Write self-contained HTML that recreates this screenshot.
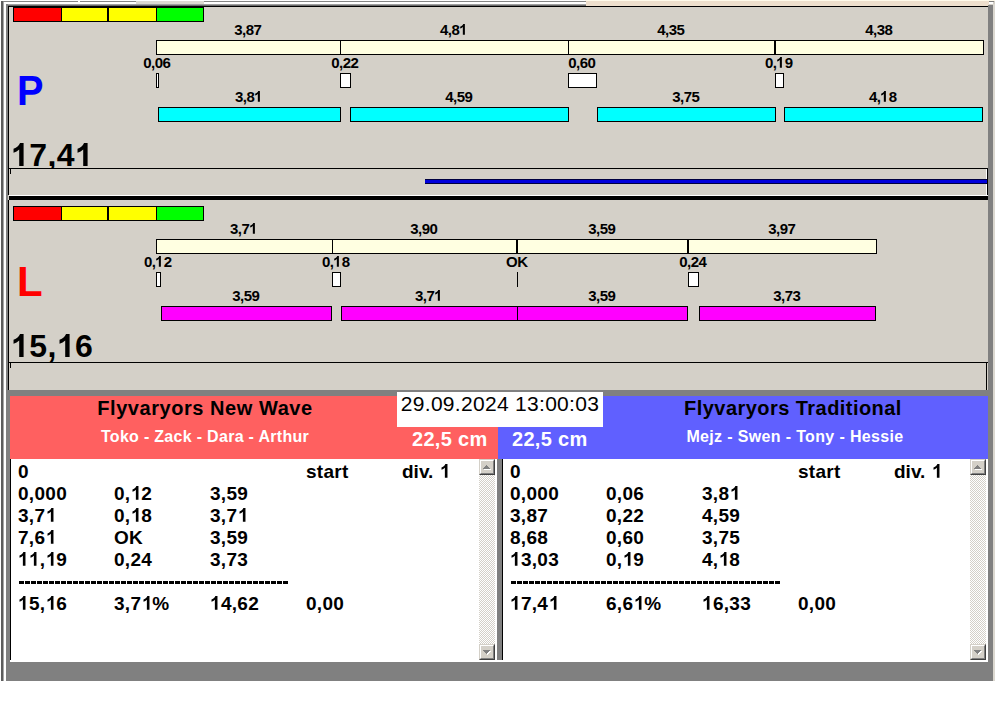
<!DOCTYPE html>
<html>
<head>
<meta charset="utf-8">
<title>Scoreboard</title>
<style>
html,body{margin:0;padding:0;}
body{width:995px;height:716px;background:#ffffff;overflow:hidden;position:relative;
 font-family:"Liberation Sans",sans-serif;font-weight:bold;color:#000;}
.a{position:absolute;box-sizing:border-box;}
.bar{position:absolute;box-sizing:border-box;border:1px solid #000;height:15px;}
.cream{background:#ffffe1;}
.cy{background:#00ffff;}
.mg{background:#ff00ff;}
.wh{background:#ffffff;}
.lbl{position:absolute;width:60px;margin-left:-30px;text-align:center;font-size:15px;line-height:14px;height:14px;white-space:nowrap;letter-spacing:-0.5px;text-indent:-0.5px;}
.big{position:absolute;font-size:32px;line-height:32px;white-space:nowrap;letter-spacing:0.4px;}
.let{position:absolute;font-size:42px;line-height:42px;white-space:nowrap;}
.row{position:absolute;font-size:19px;line-height:22px;height:22px;white-space:nowrap;letter-spacing:0.3px;}
.dash{width:269px;height:3px;background:repeating-linear-gradient(90deg,#000 0,#000 5px,#fff 5px,#fff 6px);}

.sb{position:absolute;width:16px;top:459px;height:201px;
 background-color:#fff;
 background-image:linear-gradient(45deg,#d4d0c8 25%,transparent 25%,transparent 75%,#d4d0c8 75%),linear-gradient(45deg,#d4d0c8 25%,transparent 25%,transparent 75%,#d4d0c8 75%);
 background-size:2px 2px;background-position:0 0,1px 1px;}
.btn{position:absolute;left:0;width:16px;height:16px;box-sizing:border-box;background:#d4d0c8;
 border-top:1px solid #d4d0c8;border-left:1px solid #d4d0c8;border-right:1px solid #404040;border-bottom:1px solid #404040;}
.btn:before{content:"";position:absolute;left:0;top:0;right:0;bottom:0;
 border-top:1px solid #fff;border-left:1px solid #fff;border-right:1px solid #808080;border-bottom:1px solid #808080;}
.btn svg{position:absolute;left:-1px;top:-1px;}
.z{font-size:0;color:transparent;}
.g1{display:inline-block;width:0.5562em;height:0.7188em;vertical-align:baseline;fill:#000;overflow:visible;}
</style>
</head>
<body>
<!-- window background -->
<div class="a" style="left:0;top:0;width:995px;height:681px;background:#d4d0c8;"></div>

<!-- top frame -->
<div class="a" style="left:0;top:0;width:586px;height:1px;background:#ffffff;"></div>
<div class="a" style="left:1px;top:1px;width:585px;height:1px;background:#858585;"></div>
<div class="a" style="left:3px;top:2px;width:583px;height:2px;background:#ffffff;"></div>
<div class="a" style="left:6px;top:4px;width:580px;height:1px;background:#a0a0a0;"></div>
<div class="a" style="left:6px;top:5px;width:580px;height:1px;background:#6a6a6a;"></div>
<div class="a" style="left:136px;top:1px;width:68px;height:3px;background:#dcd9d2;"></div>
<div class="a" style="left:78px;top:1px;width:2px;height:1px;background:#fff;"></div>
<div class="a" style="left:585px;top:0;width:410px;height:1px;background:#fffaea;"></div>
<div class="a" style="left:586px;top:1px;width:403px;height:5px;background:#eedfcd;"></div>
<div class="a" style="left:989px;top:1px;width:5px;height:1px;background:#808080;"></div>
<div class="a" style="left:989px;top:2px;width:4px;height:2px;background:#ffffff;"></div>

<!-- left frame -->
<div class="a" style="left:0;top:0;width:1px;height:681px;background:#ffffff;"></div>
<div class="a" style="left:1px;top:1px;width:2px;height:680px;background:#5c5c5c;"></div>
<div class="a" style="left:3px;top:2px;width:3px;height:679px;background:#ffffff;"></div>
<div class="a" style="left:3px;top:2px;width:1px;height:679px;background:#a8a8a8;"></div>
<div class="a" style="left:6px;top:4px;width:2px;height:677px;background:#808080;"></div>
<!-- right frame -->
<div class="a" style="left:988px;top:5px;width:5px;height:676px;background:#808080;"></div>
<div class="a" style="left:993px;top:4px;width:2px;height:677px;background:#dbd8d0;"></div>

<!-- panel borders -->
<div class="a" style="left:8px;top:6px;width:980px;height:1px;background:#000;"></div>
<div class="a" style="left:8px;top:6px;width:1px;height:189px;background:#000;"></div>
<div class="a" style="left:8px;top:200px;width:1px;height:190px;background:#000;"></div>
<!-- separator between panels -->
<div class="a" style="left:9px;top:195px;width:979px;height:1px;background:#ffffff;"></div>
<div class="a" style="left:9px;top:196px;width:979px;height:4px;background:#000;"></div>

<!-- PANEL 1 -->
<div id="p1">
<div class="a" style="left:13px;top:7px;width:191px;height:15px;background:#000;"></div>
<div class="a" style="left:14px;top:8px;width:47px;height:13px;background:#ff0000;"></div>
<div class="a" style="left:62px;top:8px;width:45px;height:13px;background:#ffff00;"></div>
<div class="a" style="left:109px;top:8px;width:47px;height:13px;background:#ffff00;"></div>
<div class="a" style="left:157px;top:8px;width:46px;height:13px;background:#00ff00;"></div>

<div class="bar cream" style="left:156px;top:40px;width:828px;"></div>
<div class="a" style="left:340px;top:40px;width:1px;height:15px;background:#000;"></div>
<div class="a" style="left:568px;top:40px;width:1px;height:15px;background:#000;"></div>
<div class="a" style="left:774px;top:40px;width:2px;height:15px;background:#000;"></div>

<div class="lbl" style="left:248px;top:23px;">3,87</div>
<div class="lbl" style="left:454px;top:23px;">4,8<span class="z">1</span><svg class="g1" viewBox="0 0 1139 1472"><path d="M806 1472H525V413Q371 557 162 626V371Q272 335 401 234.500T578 0H806Z"/></svg></div>
<div class="lbl" style="left:671px;top:23px;">4,35</div>
<div class="lbl" style="left:879px;top:23px;">4,38</div>

<div class="lbl" style="left:157px;top:56px;">0,06</div>
<div class="lbl" style="left:345px;top:56px;">0,22</div>
<div class="lbl" style="left:582px;top:56px;">0,60</div>
<div class="lbl" style="left:779px;top:56px;">0,<span class="z">1</span><svg class="g1" viewBox="0 0 1139 1472"><path d="M806 1472H525V413Q371 557 162 626V371Q272 335 401 234.500T578 0H806Z"/></svg>9</div>

<div class="bar wh" style="left:156px;top:73px;width:3px;"></div>
<div class="bar wh" style="left:340px;top:73px;width:11px;"></div>
<div class="bar wh" style="left:568px;top:73px;width:29px;"></div>
<div class="bar wh" style="left:775px;top:73px;width:9px;"></div>

<div class="lbl" style="left:249px;top:90px;">3,8<span class="z">1</span><svg class="g1" viewBox="0 0 1139 1472"><path d="M806 1472H525V413Q371 557 162 626V371Q272 335 401 234.500T578 0H806Z"/></svg></div>
<div class="lbl" style="left:459px;top:90px;">4,59</div>
<div class="lbl" style="left:686px;top:90px;">3,75</div>
<div class="lbl" style="left:883px;top:90px;">4,<span class="z">1</span><svg class="g1" viewBox="0 0 1139 1472"><path d="M806 1472H525V413Q371 557 162 626V371Q272 335 401 234.500T578 0H806Z"/></svg>8</div>

<div class="bar cy" style="left:158px;top:107px;width:183px;"></div>
<div class="bar cy" style="left:350px;top:107px;width:219px;"></div>
<div class="bar cy" style="left:597px;top:107px;width:179px;"></div>
<div class="bar cy" style="left:784px;top:107px;width:199px;"></div>

<div class="let" style="left:17px;top:70px;color:#0000ff;transform:scale(0.945,1.015);transform-origin:2px 6px;">P</div>
<div class="a" style="left:9px;top:130px;width:200px;height:38px;overflow:hidden;"><div class="big" style="left:2px;top:9px;"><span class="z">1</span><svg class="g1" viewBox="0 0 1139 1472"><path d="M806 1472H525V413Q371 557 162 626V371Q272 335 401 234.500T578 0H806Z"/></svg>7,4<span class="z">1</span><svg class="g1" viewBox="0 0 1139 1472"><path d="M806 1472H525V413Q371 557 162 626V371Q272 335 401 234.500T578 0H806Z"/></svg></div></div>

<!-- score box -->
<div class="a" style="left:9px;top:168px;width:979px;height:1px;background:#000;"></div>
<div class="a" style="left:10px;top:169px;width:1px;height:5px;background:#000;"></div>
<div class="a" style="left:986px;top:169px;width:1px;height:26px;background:#ffffff;"></div>
<div class="a" style="left:987px;top:168px;width:1px;height:27px;background:#000;"></div>
<div class="a" style="left:425px;top:179px;width:562px;height:5px;background:#0000dc;border-top:1px solid #000040;border-bottom:1px solid #000040;"></div>
</div>

<!-- PANEL 2 -->
<div id="p2">
<div class="a" style="left:13px;top:206px;width:191px;height:15px;background:#000;"></div>
<div class="a" style="left:14px;top:207px;width:47px;height:13px;background:#ff0000;"></div>
<div class="a" style="left:62px;top:207px;width:45px;height:13px;background:#ffff00;"></div>
<div class="a" style="left:109px;top:207px;width:47px;height:13px;background:#ffff00;"></div>
<div class="a" style="left:157px;top:207px;width:46px;height:13px;background:#00ff00;"></div>

<div class="bar cream" style="left:156px;top:239px;width:721px;"></div>
<div class="a" style="left:332px;top:239px;width:1px;height:15px;background:#000;"></div>
<div class="a" style="left:516px;top:239px;width:2px;height:15px;background:#000;"></div>
<div class="a" style="left:687px;top:239px;width:2px;height:15px;background:#000;"></div>

<div class="lbl" style="left:244px;top:222px;">3,7<span class="z">1</span><svg class="g1" viewBox="0 0 1139 1472"><path d="M806 1472H525V413Q371 557 162 626V371Q272 335 401 234.500T578 0H806Z"/></svg></div>
<div class="lbl" style="left:424px;top:222px;">3,90</div>
<div class="lbl" style="left:602px;top:222px;">3,59</div>
<div class="lbl" style="left:782px;top:222px;">3,97</div>

<div class="lbl" style="left:158px;top:255px;">0,<span class="z">1</span><svg class="g1" viewBox="0 0 1139 1472"><path d="M806 1472H525V413Q371 557 162 626V371Q272 335 401 234.500T578 0H806Z"/></svg>2</div>
<div class="lbl" style="left:336px;top:255px;">0,<span class="z">1</span><svg class="g1" viewBox="0 0 1139 1472"><path d="M806 1472H525V413Q371 557 162 626V371Q272 335 401 234.500T578 0H806Z"/></svg>8</div>
<div class="lbl" style="left:517px;top:255px;">OK</div>
<div class="lbl" style="left:693px;top:255px;">0,24</div>

<div class="bar wh" style="left:156px;top:272px;width:5px;"></div>
<div class="bar wh" style="left:332px;top:272px;width:9px;"></div>
<div class="a" style="left:517px;top:272px;width:1px;height:15px;background:#000;"></div>
<div class="bar wh" style="left:688px;top:272px;width:11px;"></div>

<div class="lbl" style="left:246px;top:289px;">3,59</div>
<div class="lbl" style="left:429px;top:289px;">3,7<span class="z">1</span><svg class="g1" viewBox="0 0 1139 1472"><path d="M806 1472H525V413Q371 557 162 626V371Q272 335 401 234.500T578 0H806Z"/></svg></div>
<div class="lbl" style="left:602px;top:289px;">3,59</div>
<div class="lbl" style="left:787px;top:289px;">3,73</div>

<div class="bar mg" style="left:161px;top:306px;width:171px;"></div>
<div class="bar mg" style="left:341px;top:306px;width:177px;"></div>
<div class="bar mg" style="left:517px;top:306px;width:171px;"></div>
<div class="bar mg" style="left:699px;top:306px;width:177px;"></div>

<div class="let" style="left:17px;top:261px;color:#ff0000;">L</div>
<div class="big" style="left:11px;top:330px;"><span class="z">1</span><svg class="g1" viewBox="0 0 1139 1472"><path d="M806 1472H525V413Q371 557 162 626V371Q272 335 401 234.500T578 0H806Z"/></svg>5,<span class="z">1</span><svg class="g1" viewBox="0 0 1139 1472"><path d="M806 1472H525V413Q371 557 162 626V371Q272 335 401 234.500T578 0H806Z"/></svg>6</div>

<div class="a" style="left:9px;top:362px;width:979px;height:1px;background:#000;"></div>
<div class="a" style="left:10px;top:363px;width:1px;height:5px;background:#000;"></div>
<div class="a" style="left:986px;top:363px;width:1px;height:27px;background:#000;"></div>
</div>

<!-- LOWER SECTION -->
<div class="a" style="left:6px;top:390px;width:987px;height:291px;background:#808080;"></div>
<div class="a" style="left:10px;top:396px;width:488px;height:63px;background:#ff6060;"></div>
<div class="a" style="left:498px;top:396px;width:490px;height:63px;background:#6060ff;"></div>

<div class="a" style="left:10px;top:396px;width:390px;text-align:center;font-size:20px;line-height:24px;letter-spacing:0.55px;white-space:nowrap;">Flyvaryors New Wave</div>
<div class="a" style="left:10px;top:427px;width:390px;text-align:center;font-size:16px;line-height:20px;letter-spacing:0.3px;color:#fff;white-space:nowrap;">Toko - Zack - Dara - Arthur</div>
<div class="a" style="left:600px;top:396px;width:386px;text-align:center;font-size:20px;line-height:24px;letter-spacing:0.45px;white-space:nowrap;">Flyvaryors Traditional</div>
<div class="a" style="left:602px;top:427px;width:386px;text-align:center;font-size:16px;line-height:20px;letter-spacing:0.35px;color:#fff;white-space:nowrap;">Mejz - Swen - Tony - Hessie</div>

<div class="a" style="left:397px;top:392px;width:206px;height:35px;background:#fff;"></div>
<div class="a" style="left:397px;top:392px;width:206px;text-align:center;font-size:21px;line-height:24px;letter-spacing:0.3px;font-weight:normal;white-space:nowrap;">29.09.2024 13:00:03</div>
<div class="a" style="left:412px;top:427px;font-size:20px;line-height:24px;letter-spacing:0.3px;color:#fff;white-space:nowrap;">22,5 cm</div>
<div class="a" style="left:512px;top:427px;font-size:20px;line-height:24px;letter-spacing:0.3px;color:#fff;white-space:nowrap;">22,5 cm</div>

<!-- list boxes -->
<div class="a" style="left:10px;top:459px;width:487px;height:202px;background:#fff;"></div>
<div class="a" style="left:502px;top:459px;width:1px;height:202px;background:#000;"></div>
<div class="a" style="left:10px;top:459px;width:1px;height:201px;background:#000;"></div>
<div class="a" style="left:503px;top:459px;width:485px;height:202px;background:#fff;"></div>

<div id="listL">
<div class="row" style="left:18px;top:461px;">0</div>
<div class="row" style="left:306px;top:461px;">start</div>
<div class="row" style="left:402px;top:461px;letter-spacing:0;word-spacing:1px;">div. <span class="z">1</span><svg class="g1" viewBox="0 0 1139 1472"><path d="M806 1472H525V413Q371 557 162 626V371Q272 335 401 234.500T578 0H806Z"/></svg></div>
<div class="row" style="left:18px;top:483px;">0,000</div>
<div class="row" style="left:114px;top:483px;">0,<span class="z">1</span><svg class="g1" viewBox="0 0 1139 1472"><path d="M806 1472H525V413Q371 557 162 626V371Q272 335 401 234.500T578 0H806Z"/></svg>2</div>
<div class="row" style="left:210px;top:483px;">3,59</div>
<div class="row" style="left:18px;top:505px;">3,7<span class="z">1</span><svg class="g1" viewBox="0 0 1139 1472"><path d="M806 1472H525V413Q371 557 162 626V371Q272 335 401 234.500T578 0H806Z"/></svg></div>
<div class="row" style="left:114px;top:505px;">0,<span class="z">1</span><svg class="g1" viewBox="0 0 1139 1472"><path d="M806 1472H525V413Q371 557 162 626V371Q272 335 401 234.500T578 0H806Z"/></svg>8</div>
<div class="row" style="left:210px;top:505px;">3,7<span class="z">1</span><svg class="g1" viewBox="0 0 1139 1472"><path d="M806 1472H525V413Q371 557 162 626V371Q272 335 401 234.500T578 0H806Z"/></svg></div>
<div class="row" style="left:18px;top:527px;">7,6<span class="z">1</span><svg class="g1" viewBox="0 0 1139 1472"><path d="M806 1472H525V413Q371 557 162 626V371Q272 335 401 234.500T578 0H806Z"/></svg></div>
<div class="row" style="left:114px;top:527px;">OK</div>
<div class="row" style="left:210px;top:527px;">3,59</div>
<div class="row" style="left:18px;top:549px;"><span class="z">1</span><svg class="g1" viewBox="0 0 1139 1472"><path d="M806 1472H525V413Q371 557 162 626V371Q272 335 401 234.500T578 0H806Z"/></svg><span class="z">1</span><svg class="g1" viewBox="0 0 1139 1472"><path d="M806 1472H525V413Q371 557 162 626V371Q272 335 401 234.500T578 0H806Z"/></svg>,<span class="z">1</span><svg class="g1" viewBox="0 0 1139 1472"><path d="M806 1472H525V413Q371 557 162 626V371Q272 335 401 234.500T578 0H806Z"/></svg>9</div>
<div class="row" style="left:114px;top:549px;">0,24</div>
<div class="row" style="left:210px;top:549px;">3,73</div>
<div class="a dash" style="left:19px;top:581px;"></div>
<div class="row" style="left:18px;top:593px;"><span class="z">1</span><svg class="g1" viewBox="0 0 1139 1472"><path d="M806 1472H525V413Q371 557 162 626V371Q272 335 401 234.500T578 0H806Z"/></svg>5,<span class="z">1</span><svg class="g1" viewBox="0 0 1139 1472"><path d="M806 1472H525V413Q371 557 162 626V371Q272 335 401 234.500T578 0H806Z"/></svg>6</div>
<div class="row" style="left:114px;top:593px;">3,7<span class="z">1</span><svg class="g1" viewBox="0 0 1139 1472"><path d="M806 1472H525V413Q371 557 162 626V371Q272 335 401 234.500T578 0H806Z"/></svg>%</div>
<div class="row" style="left:210px;top:593px;"><span class="z">1</span><svg class="g1" viewBox="0 0 1139 1472"><path d="M806 1472H525V413Q371 557 162 626V371Q272 335 401 234.500T578 0H806Z"/></svg>4,62</div>
<div class="row" style="left:306px;top:593px;">0,00</div>
</div>
<div id="listR">
<div class="row" style="left:510px;top:461px;">0</div>
<div class="row" style="left:798px;top:461px;">start</div>
<div class="row" style="left:894px;top:461px;letter-spacing:0;word-spacing:1px;">div. <span class="z">1</span><svg class="g1" viewBox="0 0 1139 1472"><path d="M806 1472H525V413Q371 557 162 626V371Q272 335 401 234.500T578 0H806Z"/></svg></div>
<div class="row" style="left:510px;top:483px;">0,000</div>
<div class="row" style="left:606px;top:483px;">0,06</div>
<div class="row" style="left:702px;top:483px;">3,8<span class="z">1</span><svg class="g1" viewBox="0 0 1139 1472"><path d="M806 1472H525V413Q371 557 162 626V371Q272 335 401 234.500T578 0H806Z"/></svg></div>
<div class="row" style="left:510px;top:505px;">3,87</div>
<div class="row" style="left:606px;top:505px;">0,22</div>
<div class="row" style="left:702px;top:505px;">4,59</div>
<div class="row" style="left:510px;top:527px;">8,68</div>
<div class="row" style="left:606px;top:527px;">0,60</div>
<div class="row" style="left:702px;top:527px;">3,75</div>
<div class="row" style="left:510px;top:549px;"><span class="z">1</span><svg class="g1" viewBox="0 0 1139 1472"><path d="M806 1472H525V413Q371 557 162 626V371Q272 335 401 234.500T578 0H806Z"/></svg>3,03</div>
<div class="row" style="left:606px;top:549px;">0,<span class="z">1</span><svg class="g1" viewBox="0 0 1139 1472"><path d="M806 1472H525V413Q371 557 162 626V371Q272 335 401 234.500T578 0H806Z"/></svg>9</div>
<div class="row" style="left:702px;top:549px;">4,<span class="z">1</span><svg class="g1" viewBox="0 0 1139 1472"><path d="M806 1472H525V413Q371 557 162 626V371Q272 335 401 234.500T578 0H806Z"/></svg>8</div>
<div class="a dash" style="left:511px;top:581px;"></div>
<div class="row" style="left:510px;top:593px;"><span class="z">1</span><svg class="g1" viewBox="0 0 1139 1472"><path d="M806 1472H525V413Q371 557 162 626V371Q272 335 401 234.500T578 0H806Z"/></svg>7,4<span class="z">1</span><svg class="g1" viewBox="0 0 1139 1472"><path d="M806 1472H525V413Q371 557 162 626V371Q272 335 401 234.500T578 0H806Z"/></svg></div>
<div class="row" style="left:606px;top:593px;">6,6<span class="z">1</span><svg class="g1" viewBox="0 0 1139 1472"><path d="M806 1472H525V413Q371 557 162 626V371Q272 335 401 234.500T578 0H806Z"/></svg>%</div>
<div class="row" style="left:702px;top:593px;"><span class="z">1</span><svg class="g1" viewBox="0 0 1139 1472"><path d="M806 1472H525V413Q371 557 162 626V371Q272 335 401 234.500T578 0H806Z"/></svg>6,33</div>
<div class="row" style="left:798px;top:593px;">0,00</div>
</div>
<!-- scrollbars -->
<div class="sb" style="left:479px;"><div class="btn" style="top:0;"><svg width="16" height="16" viewBox="0 0 16 16" shape-rendering="crispEdges"><path d="M8 7h1v1h1v1h1v1h1v1h-7v-1h1v-1h1v-1h1z" fill="#fff"/><path d="M7 6h1v1h1v1h1v1h1v1h-7v-1h1v-1h1v-1h1z" fill="#808080"/></svg></div><div class="btn" style="top:185px;"><svg width="16" height="16" viewBox="0 0 16 16" shape-rendering="crispEdges"><path d="M5 7h7v1h-1v1h-1v1h-1v1h-1v-1h-1v-1h-1v-1h-1z" fill="#fff"/><path d="M4 6h7v1h-1v1h-1v1h-1v1h-1v-1h-1v-1h-1v-1h-1z" fill="#808080"/></svg></div></div>
<div class="sb" style="left:970px;"><div class="btn" style="top:0;"><svg width="16" height="16" viewBox="0 0 16 16" shape-rendering="crispEdges"><path d="M8 7h1v1h1v1h1v1h1v1h-7v-1h1v-1h1v-1h1z" fill="#fff"/><path d="M7 6h1v1h1v1h1v1h1v1h-7v-1h1v-1h1v-1h1z" fill="#808080"/></svg></div><div class="btn" style="top:185px;"><svg width="16" height="16" viewBox="0 0 16 16" shape-rendering="crispEdges"><path d="M5 7h7v1h-1v1h-1v1h-1v1h-1v-1h-1v-1h-1v-1h-1z" fill="#fff"/><path d="M4 6h7v1h-1v1h-1v1h-1v1h-1v-1h-1v-1h-1v-1h-1z" fill="#808080"/></svg></div></div>
<div class="a" style="left:10px;top:660px;width:978px;height:2px;background:#fff;"></div>
</body>
</html>
